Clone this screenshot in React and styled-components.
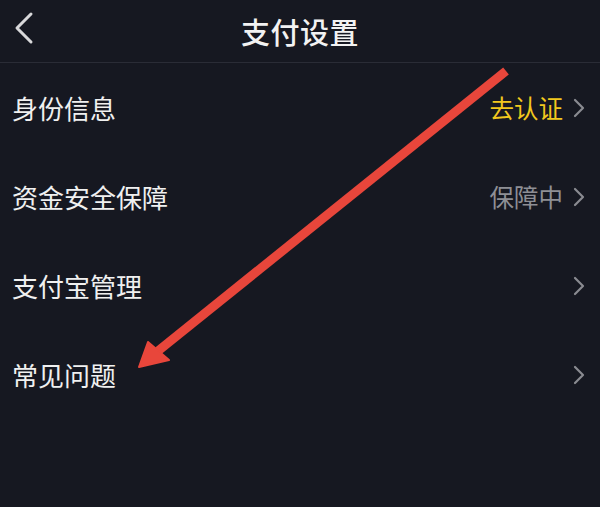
import React from "react";
import styled, { createGlobalStyle } from "styled-components";

const GlobalStyle = createGlobalStyle`
  html, body {
    margin: 0;
    padding: 0;
    background: #161821;
  }
  body {
    font-family: "Noto Sans CJK SC", "Noto Sans", sans-serif;
  }
`;

const Screen = styled.div`
  position: relative;
  width: 600px;
  height: 507px;
  background: #161821;
  overflow: hidden;
`;

const Header = styled.div`
  height: 62px;
  display: flex;
  align-items: center;
  justify-content: center;
  position: relative;
  border-bottom: 1px solid #2a2c36;
`;

const BackButton = styled.div`
  position: absolute;
  left: 12px;
  top: 10px;
  width: 26px;
  height: 36px;
  display: flex;
  align-items: center;
`;

const Title = styled.h1`
  margin: 0;
  font-size: 29px;
  font-weight: 500;
  color: #f2f2f2;
  letter-spacing: 0.5px;
`;

const List = styled.div`
  display: flex;
  flex-direction: column;
`;

const Row = styled.div`
  height: 89px;
  display: flex;
  align-items: center;
  justify-content: space-between;
  padding: 0 14px 0 12px;
`;

const Label = styled.span`
  font-size: 26px;
  color: #f0f0f0;
`;

const Right = styled.div`
  display: flex;
  align-items: center;
  gap: 9px;
`;

const Status = styled.span`
  font-size: 24.5px;
  color: ${(p) => p.color};
`;

const Overlay = styled.svg`
  position: absolute;
  left: 0;
  top: 0;
  pointer-events: none;
`;

const Chevron = () => (
  <svg width="14" height="20" viewBox="0 0 14 20">
    <path d="M3 2 L11 10 L3 18" fill="none" stroke="#8a8b91" strokeWidth="2.2" strokeLinecap="round" strokeLinejoin="round" />
  </svg>
);

const rows = [
  { label: "身份信息", status: "去认证", color: "#f2c81e" },
  { label: "资金安全保障", status: "保障中", color: "#8e8f95" },
  { label: "支付宝管理" },
  { label: "常见问题" },
];

export default function App() {
  return (
    <>
      <GlobalStyle />
      <Screen>
        <Header>
          <BackButton>
            <svg width="22" height="34" viewBox="0 0 22 34">
              <path d="M19 3 L5 17 L19 31" fill="none" stroke="#d8d8da" strokeWidth="3" strokeLinecap="round" strokeLinejoin="round" />
            </svg>
          </BackButton>
          <Title>支付设置</Title>
        </Header>
        <List>
          {rows.map((r) => (
            <Row key={r.label}>
              <Label>{r.label}</Label>
              <Right>
                {r.status && <Status color={r.color}>{r.status}</Status>}
                <Chevron />
              </Right>
            </Row>
          ))}
        </List>
        <Overlay width="600" height="507" viewBox="0 0 600 507">
          <line x1="506" y1="71" x2="158" y2="351" stroke="#e8463b" strokeWidth="9" />
          <polygon points="139,367 148,342 169,360" fill="#e8463b" stroke="#e8463b" strokeWidth="2" strokeLinejoin="round" />
        </Overlay>
      </Screen>
    </>
  );
}
